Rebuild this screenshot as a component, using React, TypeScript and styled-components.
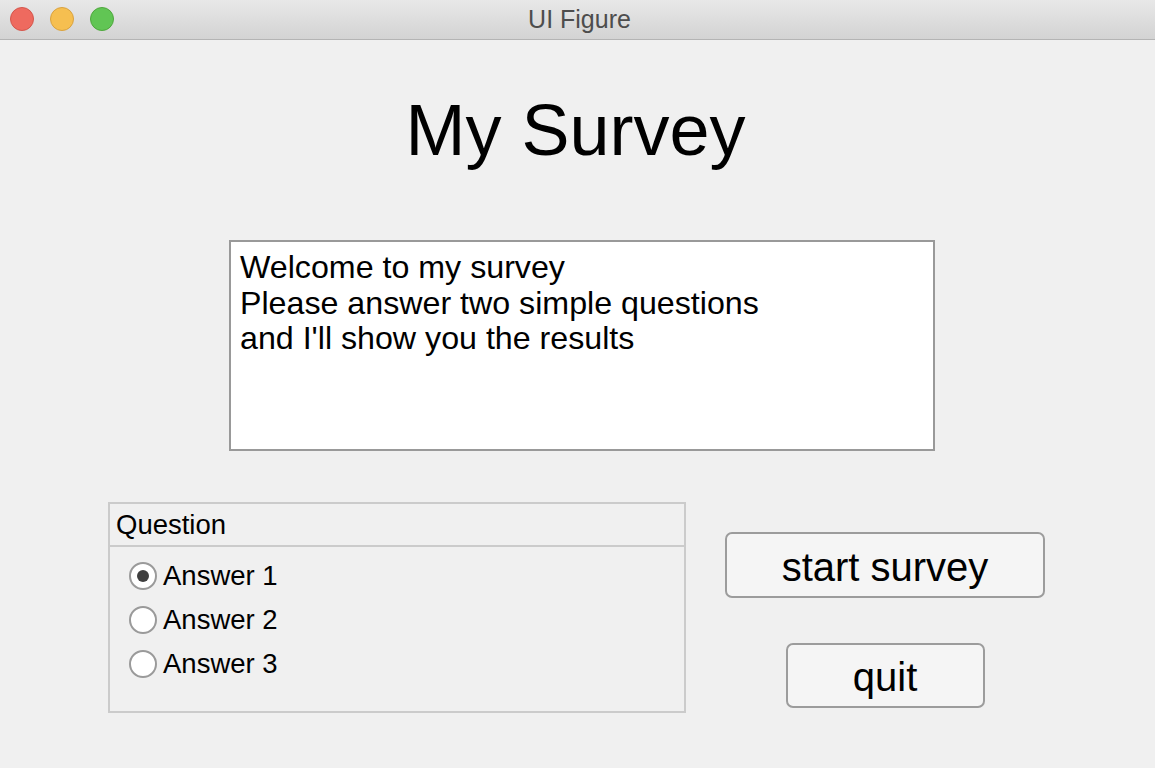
import React, { useState } from "react";
import styled, { createGlobalStyle } from "styled-components";

const GlobalStyle = createGlobalStyle`
	html, body {
		margin: 0;
		padding: 0;
		background: #f0f0f0;
		font-family: "Liberation Sans", Arial, sans-serif;
	}
`;

const answers = ["Answer 1", "Answer 2", "Answer 3"];

const lights = [
	{ fill: "#ee6a5f", edge: "#d4564c" },
	{ fill: "#f6bf50", edge: "#d9a23f" },
	{ fill: "#61c554", edge: "#4fa73d" },
];

const App: React.FC = () => {
	const [selected, setSelected] = useState(0);

	return (
		<Window>
			<GlobalStyle />
			<TitleBar>
				<Lights>
					{lights.map((l, i) => (
						<Light key={i} $fill={l.fill} $edge={l.edge} />
					))}
				</Lights>
				<WindowTitle>UI Figure</WindowTitle>
			</TitleBar>
			<Content>
				<Heading>My Survey</Heading>
				<TextBox>
					Welcome to my survey
					<br />
					Please answer two simple questions
					<br />
					and I'll show you the results
				</TextBox>
				<BottomRow>
					<Panel>
						<PanelHeader>Question</PanelHeader>
						<RadioList>
							{answers.map((a, i) => (
								<RadioRow key={a} onClick={() => setSelected(i)}>
									<RadioCircle $checked={selected === i} />
									<span>{a}</span>
								</RadioRow>
							))}
						</RadioList>
					</Panel>
					<Buttons>
						<PushButton $width={320} $height={66}>
							start survey
						</PushButton>
						<PushButton $width={199} $height={65}>
							quit
						</PushButton>
					</Buttons>
				</BottomRow>
			</Content>
		</Window>
	);
};

export default App;

const Window = styled.div`
	width: 1155px;
	height: 768px;
	overflow: hidden;
	background: #f0f0f0;
`;

const TitleBar = styled.div`
	position: relative;
	height: 39px;
	display: flex;
	align-items: center;
	justify-content: center;
	background: linear-gradient(#e8e8e8, #d3d3d3);
	border-bottom: 1px solid #b4b4b4;
`;

const Lights = styled.div`
	position: absolute;
	left: 10px;
	top: 7px;
	display: flex;
	gap: 16px;
`;

const Light = styled.div<{ $fill: string; $edge: string }>`
	width: 24px;
	height: 24px;
	box-sizing: border-box;
	border-radius: 50%;
	background: ${(p) => p.$fill};
	border: 1px solid ${(p) => p.$edge};
`;

const WindowTitle = styled.div`
	font-size: 25px;
	color: #4d4d4d;
	margin-left: 4px;
`;

const Content = styled.div`
	display: flex;
	flex-direction: column;
	align-items: center;
	padding-top: 54px;
`;

const Heading = styled.h1`
	margin: 0;
	font-weight: normal;
	font-size: 72px;
	line-height: 72px;
	color: #000;
	margin-left: -4px;
`;

const TextBox = styled.div`
	box-sizing: border-box;
	margin-top: 74px;
	margin-left: 9px;
	width: 706px;
	height: 211px;
	background: #fff;
	border: 2px solid #999;
	padding: 8px 9px;
	font-size: 32.2px;
	line-height: 35.7px;
	color: #000;
`;

const BottomRow = styled.div`
	align-self: flex-start;
	margin-top: 51px;
	margin-left: 108px;
	display: flex;
	gap: 39px;
`;

const Panel = styled.div`
	box-sizing: border-box;
	width: 578px;
	height: 211px;
	border: 2px solid #cbcbcb;
`;

const PanelHeader = styled.div`
	height: 41px;
	line-height: 42px;
	padding-left: 6px;
	font-size: 27.5px;
	border-bottom: 2px solid #cbcbcb;
`;

const RadioList = styled.div`
	padding: 7px 0 0 19px;
	display: flex;
	flex-direction: column;
`;

const RadioRow = styled.div`
	height: 44px;
	display: flex;
	align-items: center;
	gap: 6px;
	font-size: 27.5px;
	cursor: pointer;
`;

const RadioCircle = styled.div<{ $checked: boolean }>`
	box-sizing: border-box;
	width: 28px;
	height: 28px;
	border-radius: 50%;
	border: 2px solid #9a9a9a;
	background: #fff;
	display: flex;
	align-items: center;
	justify-content: center;

	&::after {
		content: "";
		width: 12px;
		height: 12px;
		border-radius: 50%;
		background: #3f3f3f;
		display: ${(p) => (p.$checked ? "block" : "none")};
	}
`;

const Buttons = styled.div`
	width: 320px;
	padding-top: 30px;
	display: flex;
	flex-direction: column;
	align-items: center;
	gap: 45px;
`;

const PushButton = styled.button<{ $width: number; $height: number }>`
	box-sizing: border-box;
	width: ${(p) => p.$width}px;
	height: ${(p) => p.$height}px;
	border: 2px solid #9c9c9c;
	border-radius: 7px;
	background: #f5f5f5;
	font-family: "Liberation Sans", Arial, sans-serif;
	font-size: 40px;
	color: #000;
	padding: 4px 0 0;
	cursor: pointer;
`;
